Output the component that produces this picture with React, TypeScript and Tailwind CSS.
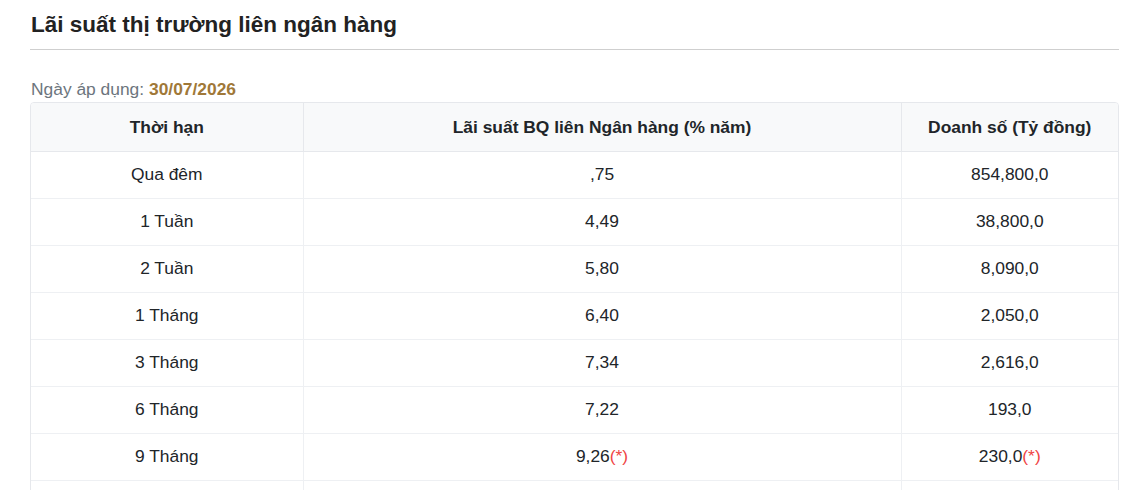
import React from 'react';

const rows = [
  { term: 'Qua đêm', rate: ',75', volume: '854,800,0' },
  { term: '1 Tuần', rate: '4,49', volume: '38,800,0' },
  { term: '2 Tuần', rate: '5,80', volume: '8,090,0' },
  { term: '1 Tháng', rate: '6,40', volume: '2,050,0' },
  { term: '3 Tháng', rate: '7,34', volume: '2,616,0' },
  { term: '6 Tháng', rate: '7,22', volume: '193,0' },
  { term: '9 Tháng', rate: '9,26', volume: '230,0', star: true },
  { term: '', rate: '', volume: '' },
];

const App = () => {
  return (
    <div className="min-h-screen bg-white pl-[30px] pr-[13px] font-['Liberation_Sans',Arial,sans-serif] text-[#212529]">
      {/* Header */}
      <h2 className="border-b border-[#cfcfcf] pl-px pt-[11px] pb-[11px] text-[22.5px] font-bold leading-[27px] text-[#222]">
        Lãi suất thị trường liên ngân hàng
      </h2>

      <p className="mt-[28px] pl-px text-[17.4px] leading-[22px] text-[#6c757d]">
        Ngày áp dụng: <span className="font-bold text-[#a07838]">30/07/2026</span>
      </p>

      {/* Table */}
      <div className="mt-[2px] overflow-hidden rounded-t-[4px] border border-[#e6e8ec]">
        <table className="w-full border-collapse text-[17.4px]">
          <colgroup>
            <col className="w-[272px]" />
            <col className="w-[598px]" />
            <col />
          </colgroup>
          <thead>
            <tr className="h-[48px] bg-[#f8f9fa]">
              <th className="border-b border-[#e6e8ec] font-bold">Thời hạn</th>
              <th className="border-b border-l border-[#e6e8ec] font-bold">Lãi suất BQ liên Ngân hàng (% năm)</th>
              <th className="border-b border-l border-[#e6e8ec] font-bold">Doanh số (Tỷ đồng)</th>
            </tr>
          </thead>
          <tbody>
            {rows.map((r, i) => (
              <tr key={i} className="h-[47px] text-center">
                <td className="border-b border-[#eef0f3]">{r.term}</td>
                <td className="border-b border-l border-[#eef0f3]">
                  {r.rate}
                  {r.star && <span className="text-[#ef4444]">(*)</span>}
                </td>
                <td className="border-b border-l border-[#eef0f3]">
                  {r.volume}
                  {r.star && <span className="text-[#ef4444]">(*)</span>}
                </td>
              </tr>
            ))}
          </tbody>
        </table>
      </div>
    </div>
  );
};

export default App;
